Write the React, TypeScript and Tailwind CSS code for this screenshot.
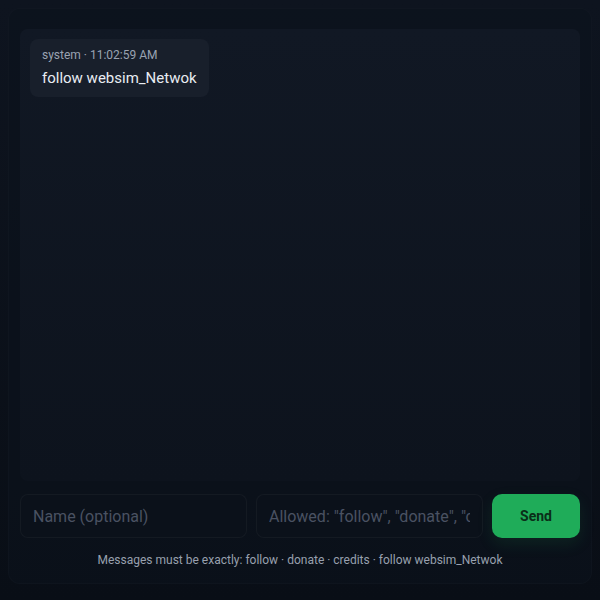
import React from "react";

export default function App() {
  return (
    <div
      className="h-[600px] w-[600px] overflow-hidden bg-gradient-to-b from-[#0e141f] to-[#090e16] p-2"
      style={{ fontFamily: "Roboto, 'Liberation Sans', sans-serif" }}
    >
      <div className="flex h-[576px] flex-col rounded-xl border border-white/[0.02] bg-[#0c121c]/60 px-[11px] pb-3 pt-5">
        <div className="h-[452px] rounded-lg bg-gradient-to-b from-[#111824] to-[#0d131d] p-[10px]">
          <div className="inline-block rounded-lg bg-[#181f2b] px-3 pb-[9px] pt-2">
            <div className="text-[12px] leading-4 text-[#9aa3b2]">system · 11:02:59 AM</div>
            <div className="mt-[5px] text-[15px] leading-5 text-[#e8ecf2]">follow websim_Netwok</div>
          </div>
        </div>
        <div className="mt-[13px] grid grid-cols-[minmax(0,1fr)_minmax(0,1fr)_88px] gap-[9px]">
          <input
            className="h-11 w-full min-w-0 rounded-lg border border-white/[0.04] bg-[#0b111a] px-3 text-base text-gray-300 outline-none placeholder:text-[#4a5262]"
            placeholder="Name (optional)"
          />
          <input
            className="h-11 w-full min-w-0 rounded-lg border border-white/[0.04] bg-[#0b111a] px-3 text-base text-gray-300 outline-none placeholder:text-[#4a5262]"
            placeholder={'Allowed: "follow", "donate", "credits", "follow websim_Netwok"'}
          />
          <button className="h-11 rounded-[10px] bg-[#1fac59] text-sm font-bold text-[#0a2e18] shadow-[0_6px_16px_rgba(31,172,89,0.12)]">
            Send
          </button>
        </div>
        <p className="mt-[13px] text-center text-[12px] text-[#98a0ae]">
          Messages must be exactly: follow · donate · credits · follow websim_Netwok
        </p>
      </div>
    </div>
  );
}
